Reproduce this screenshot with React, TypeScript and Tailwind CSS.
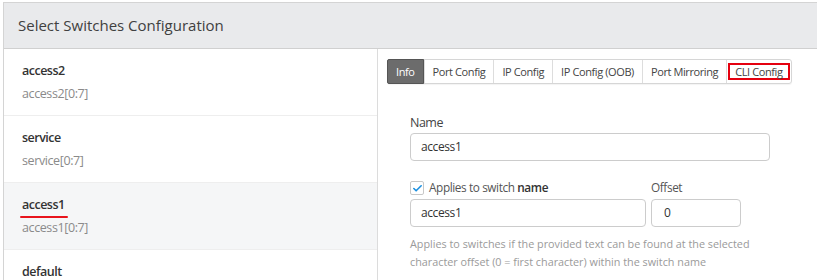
import { Check } from 'lucide-react'

const switches = [
  { name: 'access2', range: 'access2[0:7]' },
  { name: 'service', range: 'service[0:7]' },
  { name: 'access1', range: 'access1[0:7]', active: true },
  { name: 'default', range: 'default[0:7]' },
]

const tabs = ['Info', 'Port Config', 'IP Config', 'IP Config (OOB)', 'Port Mirroring', 'CLI Config']

export default function App() {
  return (
    <div className="w-[817px] h-[280px] overflow-hidden bg-white pt-[2px] pl-[3px] text-[#333] font-['Open_Sans',sans-serif]">
      <div className="border-l border-t border-[#d4d4d4] h-full flex flex-col">
        <div className="h-[46px] shrink-0 bg-[#e9eaec] border-b border-[#d0d0d0] flex items-center pl-[14px] text-[15px] text-[#404040]">
          Select Switches Configuration
        </div>
        <div className="flex flex-1">
          <div className="w-[374px] shrink-0 border-r border-[#dcdcdc] flex flex-col">
            {switches.map((s) => (
              <div
                key={s.name}
                className={`h-[67px] shrink-0 pl-[18px] pt-[12px] border-b border-[#eeeeee] ${s.active ? 'bg-[#f5f6f7]' : ''}`}
              >
                <div className="relative w-fit text-[12.5px] tracking-[-0.5px] font-semibold leading-[20px] text-[#333]">
                  {s.name}
                  {s.active && (
                    <span className="absolute left-[-2px] right-[-3px] bottom-[-3px] h-[2px] bg-[#e8141c] rounded-full" />
                  )}
                </div>
                <div className="mt-[3px] text-[12.5px] tracking-[-0.4px] leading-[20px] text-[#8a8a8a]">{s.range}</div>
              </div>
            ))}
          </div>
          <div className="flex-1 pl-[9px] pt-[10px]">
            <div className="flex w-fit whitespace-nowrap text-[11px] tracking-[-0.4px] leading-[23px] border border-[#d6d6d6] rounded-[3px] shadow-[0_1px_1px_rgba(0,0,0,0.05)]">
              {tabs.map((t, i) => {
                const cli = t === 'CLI Config'
                return (
                  <div
                    key={t}
                    className={`${cli ? 'px-[1px] py-[3px]' : 'px-[8px]'} ${i > 0 ? 'border-l border-[#dddddd]' : ''} ${
                      i === 0 ? 'bg-[#6c6c6c] text-white rounded-l-[2px] border border-[#555] -m-px mr-0' : 'text-[#444]'
                    }`}
                  >
                    {cli ? (
                      <span className="block px-[5px] leading-[13px] border-2 border-[#e5000f]">{t}</span>
                    ) : (
                      t
                    )}
                  </div>
                )
              })}
            </div>
            <div className="pl-[23px] pt-[30px] w-[383px]">
              <div className="text-[12.5px] tracking-[-0.5px] leading-[18px] text-[#444]">Name</div>
              <div className="mt-[1px] h-[28px] w-[360px] border border-[#cccccc] rounded-[4px] flex items-center pl-[10px] text-[12px] tracking-[-0.4px]">
                access1
              </div>
              <div className="flex gap-[5px] mt-[17px]">
                <div className="w-[236px]">
                  <label className="flex items-center gap-[5px] h-[20px] text-[11.8px] tracking-[-0.4px] text-[#555]">
                    <span className="w-[14px] h-[14px] border border-[#c8c8c8] rounded-[2px] flex items-center justify-center bg-white">
                      <Check size={11} strokeWidth={3.5} className="text-[#1a8fe0]" />
                    </span>
                    <span>
                      Applies to switch <b className="font-semibold text-[#333]">name</b>
                    </span>
                  </label>
                  <div className="mt-[1px] h-[28px] border border-[#cccccc] rounded-[4px] flex items-center pl-[10px] text-[12px] tracking-[-0.4px]">
                    access1
                  </div>
                </div>
                <div className="w-[90px]">
                  <div className="text-[11.8px] tracking-[-0.4px] leading-[18px] text-[#555]">Offset</div>
                  <div className="mt-[3px] h-[28px] border border-[#cccccc] rounded-[4px] flex items-center pl-[12px] text-[12px]">
                    0
                  </div>
                </div>
              </div>
              <p className="mt-[8px] text-[10.8px] leading-[18px] text-[#9a9a9a] w-[360px]">
                Applies to switches if the provided text can be found at the selected character offset (0 = first character) within the switch name
              </p>
            </div>
          </div>
        </div>
      </div>
    </div>
  )
}
